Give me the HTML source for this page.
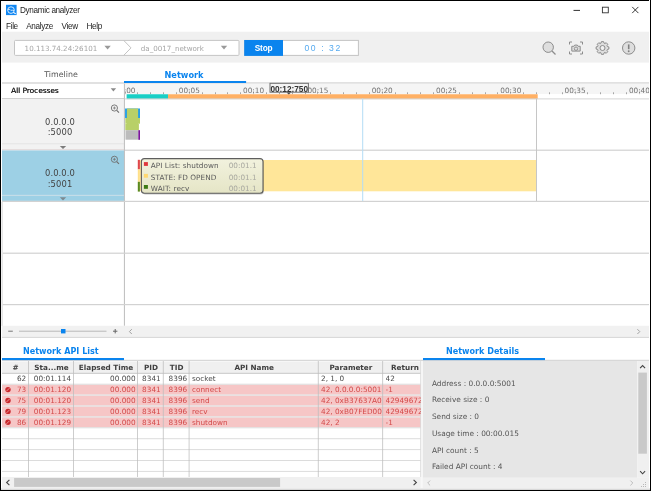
<!DOCTYPE html>
<html lang="en">
<head>
<meta charset="utf-8">
<title>Dynamic analyzer</title>
<style>
html,body{margin:0;padding:0;}
body{width:651px;height:491px;overflow:hidden;background:#fff;position:relative;font-family:"DejaVu Sans","Liberation Sans",sans-serif;font-size:7.3px;color:#4a4a4a;}
div,span,svg{position:absolute;box-sizing:border-box;}
.t{white-space:pre;line-height:10px;height:10px;}
.ui{font-family:"Liberation Sans",sans-serif;color:#1e1e1e;font-size:8.2px;letter-spacing:-0.34px;}
.ls{font-family:"Liberation Sans",sans-serif;}
.b{font-weight:bold;}
.c{text-align:center;}
.r{text-align:right;}
.red{color:#d34a4a;}
</style>
</head>
<body>
<svg style="left:0;top:0" width="651" height="491" viewBox="0 0 651 491">
<g transform="translate(6 4.8)"><rect x="0" y="0" width="10.6" height="10.3" fill="#0f86f2"/><circle cx="5" cy="5.3" r="3.3" fill="none" stroke="#fff" stroke-width="0.9" stroke-opacity="0.9"/><path d="M2 4.6 L3.8 4.6 L4.8 5.6 L6.2 5.4 L8 5.8" fill="none" stroke="#fff" stroke-width="0.8" stroke-opacity="0.9"/><path d="M7.4 7.6 L9.7 9" stroke="#fff" stroke-width="1.1"/></g>
<rect x="573.50" y="9.90" width="6.50" height="1.00" fill="#333"/>
<rect x="602.4" y="7.2" width="5.9" height="5.6" fill="none" stroke="#333" stroke-width="0.9"/>
<path d="M632.2 6.9 L638.4 13.1 M638.4 6.9 L632.2 13.1" stroke="#222" stroke-width="0.9" fill="none"/>
<rect x="2.00" y="31.70" width="647.00" height="30.90" fill="#f0f0f0"/>
<rect x="14.5" y="40.4" width="224.5" height="15" rx="1" fill="#fff" stroke="#c4c4c4" stroke-width="1"/>
<path d="M123.7 40.4 L131 47.9 L123.7 55.4" fill="none" stroke="#c4c4c4" stroke-width="1"/>
<path d="M104.40 45.80 L110.80 45.80 L107.60 49.40 Z" fill="#9a9a9a"/>
<path d="M220.80 45.80 L227.20 45.80 L224.00 49.40 Z" fill="#9a9a9a"/>
<rect x="244.7" y="40.4" width="113.7" height="15" fill="#fff" stroke="#c4c4c4" stroke-width="1"/>
<rect x="244.20" y="40.00" width="38.80" height="15.90" fill="#0a84ee"/>
<g transform="translate(549 48)"><circle cx="-0.8" cy="-0.8" r="5.2" fill="#dedede" stroke="#8c8c8c" stroke-width="1"/><path d="M3 3 L6.5 6.5" stroke="#8c8c8c" stroke-width="1.3"/></g>
<g transform="translate(576 48)"><path d="M-6.5 -3.5 V-6 H-4 M4 -6 H6.5 V-3.5 M6.5 3.5 V6 H4 M-4 6 H-6.5 V3.5" fill="none" stroke="#8c8c8c" stroke-width="1"/><path d="M-4.2 -1.7 H-2.1 L-1.3 -2.9 H1.3 L2.1 -1.7 H4.2 V3.1 H-4.2 Z" fill="#dedede" stroke="#8c8c8c" stroke-width="1" stroke-linejoin="round"/><circle cx="0" cy="0.7" r="1.7" fill="none" stroke="#8c8c8c" stroke-width="0.9"/></g>
<g transform="translate(602.5 48)"><path d="M-1.51 -4.87 L-1.09 -6.36 L1.09 -6.36 L1.51 -4.87 L2.38 -4.51 L3.72 -5.27 L5.27 -3.72 L4.51 -2.38 L4.87 -1.51 L6.36 -1.09 L6.36 1.09 L4.87 1.51 L4.51 2.38 L5.27 3.72 L3.72 5.27 L2.38 4.51 L1.51 4.87 L1.09 6.36 L-1.09 6.36 L-1.51 4.87 L-2.38 4.51 L-3.72 5.27 L-5.27 3.72 L-4.51 2.38 L-4.87 1.51 L-6.36 1.09 L-6.36 -1.09 L-4.87 -1.51 L-4.51 -2.38 L-5.27 -3.72 L-3.72 -5.27 L-2.38 -4.51 Z" fill="#dedede" stroke="#8c8c8c" stroke-width="1" stroke-linejoin="round"/><circle cx="0" cy="0" r="2.5" fill="#f0f0f0" stroke="#8c8c8c" stroke-width="1"/></g>
<g transform="translate(628.7 48)"><circle cx="0" cy="0" r="6.2" fill="#dedede" stroke="#8c8c8c" stroke-width="1"/><path d="M0 -3.6 V1.2" stroke="#808080" stroke-width="1.6"/><circle cx="0" cy="3.2" r="0.95" fill="#808080"/></g>
<rect x="2.00" y="82.40" width="647.00" height="1.20" fill="#cdcdcd"/>
<rect x="124.00" y="81.00" width="122.10" height="2.00" fill="#0a84ee"/>
<path d="M110.70 88.20 L116.10 88.20 L113.40 91.40 Z" fill="#8a8a8a"/>
<rect x="2.00" y="98.00" width="122.00" height="1.00" fill="#d0d0d0"/>
<rect x="125.00" y="83.70" width="524.00" height="10.30" fill="#f5f5f5"/>
<rect x="125.00" y="91.20" width="1.00" height="3.00" fill="#c0c0c0"/>
<rect x="137.00" y="92.30" width="1.00" height="1.90" fill="#a6a6a6"/>
<rect x="150.00" y="92.30" width="1.00" height="1.90" fill="#a6a6a6"/>
<rect x="163.00" y="92.30" width="1.00" height="1.90" fill="#a6a6a6"/>
<rect x="176.00" y="92.30" width="1.00" height="1.90" fill="#a6a6a6"/>
<rect x="189.00" y="91.20" width="1.00" height="3.00" fill="#c0c0c0"/>
<rect x="202.00" y="92.30" width="1.00" height="1.90" fill="#a6a6a6"/>
<rect x="215.00" y="92.30" width="1.00" height="1.90" fill="#a6a6a6"/>
<rect x="227.00" y="92.30" width="1.00" height="1.90" fill="#a6a6a6"/>
<rect x="240.00" y="92.30" width="1.00" height="1.90" fill="#a6a6a6"/>
<rect x="253.00" y="91.20" width="1.00" height="3.00" fill="#c0c0c0"/>
<rect x="266.00" y="92.30" width="1.00" height="1.90" fill="#a6a6a6"/>
<rect x="279.00" y="92.30" width="1.00" height="1.90" fill="#a6a6a6"/>
<rect x="292.00" y="92.30" width="1.00" height="1.90" fill="#a6a6a6"/>
<rect x="305.00" y="92.30" width="1.00" height="1.90" fill="#a6a6a6"/>
<rect x="317.00" y="91.20" width="1.00" height="3.00" fill="#c0c0c0"/>
<rect x="330.00" y="92.30" width="1.00" height="1.90" fill="#a6a6a6"/>
<rect x="343.00" y="92.30" width="1.00" height="1.90" fill="#a6a6a6"/>
<rect x="356.00" y="92.30" width="1.00" height="1.90" fill="#a6a6a6"/>
<rect x="369.00" y="92.30" width="1.00" height="1.90" fill="#a6a6a6"/>
<rect x="382.00" y="91.20" width="1.00" height="3.00" fill="#c0c0c0"/>
<rect x="395.00" y="92.30" width="1.00" height="1.90" fill="#a6a6a6"/>
<rect x="407.00" y="92.30" width="1.00" height="1.90" fill="#a6a6a6"/>
<rect x="420.00" y="92.30" width="1.00" height="1.90" fill="#a6a6a6"/>
<rect x="433.00" y="92.30" width="1.00" height="1.90" fill="#a6a6a6"/>
<rect x="446.00" y="91.20" width="1.00" height="3.00" fill="#c0c0c0"/>
<rect x="459.00" y="92.30" width="1.00" height="1.90" fill="#a6a6a6"/>
<rect x="472.00" y="92.30" width="1.00" height="1.90" fill="#a6a6a6"/>
<rect x="485.00" y="92.30" width="1.00" height="1.90" fill="#a6a6a6"/>
<rect x="497.00" y="92.30" width="1.00" height="1.90" fill="#a6a6a6"/>
<rect x="510.00" y="91.20" width="1.00" height="3.00" fill="#c0c0c0"/>
<rect x="523.00" y="92.30" width="1.00" height="1.90" fill="#a6a6a6"/>
<rect x="536.00" y="92.30" width="1.00" height="1.90" fill="#a6a6a6"/>
<rect x="549.00" y="92.30" width="1.00" height="1.90" fill="#a6a6a6"/>
<rect x="562.00" y="92.30" width="1.00" height="1.90" fill="#a6a6a6"/>
<rect x="575.00" y="91.20" width="1.00" height="3.00" fill="#c0c0c0"/>
<rect x="587.00" y="92.30" width="1.00" height="1.90" fill="#a6a6a6"/>
<rect x="600.00" y="92.30" width="1.00" height="1.90" fill="#a6a6a6"/>
<rect x="613.00" y="92.30" width="1.00" height="1.90" fill="#a6a6a6"/>
<rect x="626.00" y="92.30" width="1.00" height="1.90" fill="#a6a6a6"/>
<rect x="639.00" y="91.20" width="1.00" height="3.00" fill="#c0c0c0"/>
<rect x="126.60" y="94.25" width="41.40" height="4.85" fill="#18cfc6"/>
<rect x="168.00" y="94.25" width="369.70" height="4.85" fill="#ffb064"/>
<rect x="125.00" y="98.40" width="524.00" height="1.00" fill="#d4d4d4"/>
<rect x="270" y="83.3" width="38.4" height="8.9" fill="#f4f4f4" stroke="#6e6e6e" stroke-width="1"/>
<path d="M286.6 92.4 L291 92.4 L288.8 94.6 Z" fill="#444"/>
<rect x="2.00" y="99.00" width="122.00" height="50.60" fill="#f2f2f2"/>
<rect x="2.00" y="143.30" width="122.00" height="1.00" fill="#e4e4e4"/>
<rect x="2.00" y="149.35" width="122.00" height="0.90" fill="#dccfcf"/>
<rect x="2.00" y="150.40" width="122.00" height="50.50" fill="#9dd0e5"/>
<rect x="2.00" y="194.80" width="122.00" height="1.20" fill="#c4dde8"/>
<path d="M59.80 145.90 L66.20 145.90 L63.00 149.10 Z" fill="#7c7c7c"/>
<path d="M59.80 197.20 L66.20 197.20 L63.00 200.40 Z" fill="#7c8a90"/>
<g transform="translate(114.4 108)"><circle cx="0" cy="0" r="3.1" fill="none" stroke="#6e6e6e" stroke-width="0.9"/><path d="M2.3 2.3 L4.6 4.6" stroke="#6e6e6e" stroke-width="1.1"/><path d="M-1.5 0 H1.5 M0 -1.5 V1.5" stroke="#6e6e6e" stroke-width="0.7"/></g>
<g transform="translate(114.4 159.3)"><circle cx="0" cy="0" r="3.1" fill="none" stroke="#6e6e6e" stroke-width="0.9"/><path d="M2.3 2.3 L4.6 4.6" stroke="#6e6e6e" stroke-width="1.1"/><path d="M-1.5 0 H1.5 M0 -1.5 V1.5" stroke="#6e6e6e" stroke-width="0.7"/></g>
<rect x="123.90" y="83.60" width="1.10" height="242.20" fill="#c2c2c2"/>
<rect x="125.00" y="149.60" width="524.00" height="1.20" fill="#d2d2d2"/>
<rect x="2.00" y="200.80" width="647.00" height="1.20" fill="#d2d2d2"/>
<rect x="2.00" y="252.60" width="647.00" height="1.20" fill="#d2d2d2"/>
<rect x="2.00" y="304.00" width="647.00" height="1.20" fill="#d2d2d2"/>
<rect x="125.05" y="108.50" width="14.95" height="9.50" fill="#249ee8"/>
<rect x="126.90" y="108.50" width="11.20" height="21.70" fill="#b8d068"/>
<rect x="125.30" y="118.00" width="14.70" height="5.70" fill="#b8d068"/>
<rect x="125.30" y="123.70" width="13.60" height="6.50" fill="#b8d068"/>
<rect x="125.50" y="130.20" width="12.70" height="9.50" fill="#bcbcbc"/>
<rect x="138.30" y="130.20" width="1.70" height="9.60" fill="#7a169a"/>
<rect x="139.90" y="160.00" width="396.30" height="31.30" fill="#ffe699"/>
<rect x="137.80" y="159.80" width="2.10" height="9.60" fill="#e0484a"/>
<rect x="137.80" y="169.40" width="2.10" height="12.40" fill="#ffe08a"/>
<rect x="137.80" y="181.80" width="2.10" height="9.80" fill="#5c8a1e"/>
<rect x="362.20" y="98.50" width="1.00" height="102.50" fill="#b4dcf6"/>
<rect x="536.00" y="98.50" width="1.00" height="102.50" fill="#c6c6c6"/>
<defs><linearGradient id="tg" x1="0" y1="0" x2="0" y2="1"><stop offset="0" stop-color="#f2f2de"/><stop offset="1" stop-color="#e5e5c6"/></linearGradient></defs>
<rect x="142.4" y="159.6" width="121.4" height="35" rx="3" fill="#000" fill-opacity="0.22"/>
<rect x="141.4" y="158.6" width="121.6" height="34.6" rx="3" fill="url(#tg)" stroke="#5e5e5e" stroke-width="1.1"/>
<rect x="143.90" y="162.10" width="4.00" height="3.80" fill="#e0383c"/>
<rect x="143.90" y="173.90" width="4.00" height="3.80" fill="#ffd870"/>
<rect x="143.90" y="185.00" width="4.00" height="3.80" fill="#3c7a14"/>
<rect x="2.00" y="325.80" width="647.00" height="11.20" fill="#f1f1f1"/>
<rect x="2.00" y="336.90" width="647.00" height="1.00" fill="#d6d6d6"/>
<rect x="1.40" y="201.90" width="1.50" height="124.00" fill="#e4e4e4"/>
<rect x="8.20" y="330.70" width="4.60" height="1.00" fill="#777"/>
<rect x="19.00" y="330.70" width="87.50" height="1.00" fill="#b8b8b8"/>
<rect x="61.00" y="329.00" width="4.50" height="4.40" fill="#0a84ee"/>
<rect x="113.00" y="330.70" width="4.40" height="1.00" fill="#666"/>
<rect x="114.70" y="329.00" width="1.00" height="4.40" fill="#666"/>
<path d="M131.8 329.2 L129.4 331.6 L131.8 334" fill="none" stroke="#999" stroke-width="0.9"/>
<path d="M637.4 329.2 L639.8 331.6 L637.4 334" fill="none" stroke="#999" stroke-width="0.9"/>
<rect x="2.00" y="359.80" width="647.00" height="1.00" fill="#cfcfcf"/>
<rect x="2.00" y="358.00" width="122.00" height="2.10" fill="#0a84ee"/>
<rect x="423.00" y="358.00" width="122.00" height="2.10" fill="#0a84ee"/>
<rect x="2.00" y="361.50" width="418.80" height="11.50" fill="#f0f0f0"/>
<rect x="2.00" y="384.70" width="418.80" height="9.90" fill="#f6c6c6"/>
<rect x="2.00" y="395.60" width="418.80" height="9.90" fill="#f6c6c6"/>
<rect x="2.00" y="406.50" width="418.80" height="9.90" fill="#f6c6c6"/>
<rect x="2.00" y="417.40" width="418.80" height="9.90" fill="#f6c6c6"/>
<rect x="2.00" y="372.80" width="418.80" height="1.00" fill="#c6c6c6"/>
<rect x="2.00" y="383.70" width="418.80" height="1.00" fill="#dcdcdc"/>
<rect x="2.00" y="394.60" width="418.80" height="1.00" fill="#dcdcdc"/>
<rect x="2.00" y="405.50" width="418.80" height="1.00" fill="#dcdcdc"/>
<rect x="2.00" y="416.40" width="418.80" height="1.00" fill="#dcdcdc"/>
<rect x="2.00" y="427.30" width="418.80" height="1.00" fill="#dcdcdc"/>
<rect x="2.00" y="438.20" width="418.80" height="1.00" fill="#dcdcdc"/>
<rect x="2.00" y="449.10" width="418.80" height="1.00" fill="#dcdcdc"/>
<rect x="2.00" y="460.00" width="418.80" height="1.00" fill="#dcdcdc"/>
<rect x="2.00" y="470.90" width="418.80" height="1.00" fill="#dcdcdc"/>
<rect x="28.00" y="361.00" width="1.00" height="116.00" fill="#bcbcbc" fill-opacity="0.75"/>
<rect x="73.00" y="361.00" width="1.00" height="116.00" fill="#bcbcbc" fill-opacity="0.75"/>
<rect x="137.00" y="361.00" width="1.00" height="116.00" fill="#bcbcbc" fill-opacity="0.75"/>
<rect x="162.80" y="361.00" width="1.00" height="116.00" fill="#bcbcbc" fill-opacity="0.75"/>
<rect x="188.60" y="361.00" width="1.00" height="116.00" fill="#bcbcbc" fill-opacity="0.75"/>
<rect x="317.80" y="361.00" width="1.00" height="116.00" fill="#bcbcbc" fill-opacity="0.75"/>
<rect x="382.10" y="361.00" width="1.00" height="116.00" fill="#bcbcbc" fill-opacity="0.75"/>
<rect x="420.30" y="361.00" width="1.00" height="116.00" fill="#d8d8d8"/>
<circle cx="8" cy="389.60" r="2.7" fill="#c8282c"/><path d="M6.50 391.10 L9.50 388.10" stroke="#f3b0b0" stroke-width="0.8"/>
<circle cx="8" cy="400.50" r="2.7" fill="#c8282c"/><path d="M6.50 402.00 L9.50 399.00" stroke="#f3b0b0" stroke-width="0.8"/>
<circle cx="8" cy="411.40" r="2.7" fill="#c8282c"/><path d="M6.50 412.90 L9.50 409.90" stroke="#f3b0b0" stroke-width="0.8"/>
<circle cx="8" cy="422.30" r="2.7" fill="#c8282c"/><path d="M6.50 423.80 L9.50 420.80" stroke="#f3b0b0" stroke-width="0.8"/>
<rect x="2.00" y="477.00" width="418.80" height="11.00" fill="#f0f0f0"/>
<rect x="14.10" y="478.00" width="266.00" height="8.90" fill="#c9c9c9"/>
<path d="M9.4 479.8 L6.6 482.5 L9.4 485.2" fill="none" stroke="#444" stroke-width="1.1"/>
<path d="M413.6 479.8 L416.4 482.5 L413.6 485.2" fill="none" stroke="#444" stroke-width="1.1"/>
<rect x="421.30" y="361.00" width="1.70" height="127.00" fill="#f6f6f6"/>
<rect x="423.00" y="361.00" width="214.20" height="116.80" fill="#e6e6e6"/>
<rect x="637.20" y="361.00" width="11.80" height="116.80" fill="#f0f0f0"/>
<rect x="638.30" y="372.60" width="8.60" height="81.10" fill="#c9c9c9"/>
<path d="M640.1 368.2 L642.6 365.6 L645.1 368.2" fill="none" stroke="#444" stroke-width="1.1"/>
<path d="M640.1 471.2 L642.6 473.8 L645.1 471.2" fill="none" stroke="#444" stroke-width="1.1"/>
<rect x="423.00" y="477.80" width="226.00" height="10.20" fill="#f0f0f0"/>
<path d="M430.1 480.6 L427.7 483 L430.1 485.4" fill="none" stroke="#b0b0b0" stroke-width="0.8"/>
<path d="M630.4 480.6 L632.8 483 L630.4 485.4" fill="none" stroke="#b0b0b0" stroke-width="0.8"/>
<g fill="#b8b8b8"><rect x="645" y="482" width="1" height="1"/><rect x="645" y="484" width="1" height="1"/><rect x="643" y="484" width="1" height="1"/><rect x="645" y="486" width="1" height="1"/><rect x="643" y="486" width="1" height="1"/><rect x="641" y="486" width="1" height="1"/></g>
<rect x="0.00" y="0.00" width="651.00" height="1.00" fill="#000"/>
<rect x="0.00" y="0.00" width="1.00" height="491.00" fill="#000"/>
<rect x="649.00" y="0.00" width="1.00" height="491.00" fill="#fff"/>
<rect x="650.00" y="0.00" width="1.00" height="491.00" fill="#000"/>
<rect x="1.00" y="488.00" width="649.00" height="1.00" fill="#ebebeb"/>
<rect x="1.00" y="489.00" width="649.00" height="1.00" fill="#d8d8d8"/>
<rect x="0.00" y="490.00" width="651.00" height="1.00" fill="#000"/>
</svg>
<div id="txt" style="left:0;top:0;width:651px;height:491px;will-change:transform">
<div class="t ui" style="left:20px;top:6px;">Dynamic analyzer</div>
<div class="t ui" style="left:6px;top:22px;">File</div>
<div class="t ui" style="left:26.2px;top:22px;">Analyze</div>
<div class="t ui" style="left:61.5px;top:22px;">View</div>
<div class="t ui" style="left:86.5px;top:22px;">Help</div>
<div class="t" style="left:24.6px;top:43.8px;color:#a6a6a6;font-size:7.13px;">10.113.74.24:26101</div>
<div class="t" style="left:140.8px;top:43.8px;color:#a6a6a6;font-size:7.13px;">da_0017_network</div>
<div class="t b c ls" style="left:244.2px;top:43.3px;width:38.8px;color:#fff;font-size:8.3px;letter-spacing:-0.2px;">Stop</div>
<div class="t ls" style="left:304.4px;top:43.1px;color:#55aaf0;font-size:8.6px;letter-spacing:1.6px;">00 : 32</div>
<div class="t c" style="left:31px;top:70px;width:60px;color:#555;font-size:7.9px;">Timeline</div>
<div class="t b c" style="left:150px;top:69.6px;width:68px;color:#0a84ee;font-size:8.2px;">Network</div>
<div class="t" style="left:11px;top:85.5px;color:#222;font-size:7.35px;text-shadow:0.25px 0 0 #222;">All Processes</div>
<div style="left:125px;top:84px;width:524px;height:11px;overflow:hidden">
<div class="t c" style="left:-20.00px;top:1.8px;width:40px;color:#727272;font-size:7.3px;">00:00</div>
<div class="t c" style="left:44.30px;top:1.8px;width:40px;color:#727272;font-size:7.3px;">00:05</div>
<div class="t c" style="left:108.60px;top:1.8px;width:40px;color:#727272;font-size:7.3px;">00:10</div>
<div class="t c" style="left:172.90px;top:1.8px;width:40px;color:#727272;font-size:7.3px;">00:15</div>
<div class="t c" style="left:237.20px;top:1.8px;width:40px;color:#727272;font-size:7.3px;">00:20</div>
<div class="t c" style="left:301.50px;top:1.8px;width:40px;color:#727272;font-size:7.3px;">00:25</div>
<div class="t c" style="left:365.80px;top:1.8px;width:40px;color:#727272;font-size:7.3px;">00:30</div>
<div class="t c" style="left:430.10px;top:1.8px;width:40px;color:#727272;font-size:7.3px;">00:35</div>
<div class="t c" style="left:494.40px;top:1.8px;width:40px;color:#727272;font-size:7.3px;">00:40</div>
</div>
<div class="t b c ls" style="left:269.5px;top:85px;width:39.5px;color:#333;font-size:8.25px;">00:12:750</div>
<div class="t c" style="left:2px;top:116.5px;width:116px;color:#444;font-size:8.4px;letter-spacing:0.1px;">0.0.0.0</div>
<div class="t c" style="left:2px;top:126.5px;width:116px;color:#444;font-size:8.4px;letter-spacing:0.1px;">:5000</div>
<div class="t c" style="left:2px;top:167.5px;width:116px;color:#444;font-size:8.4px;letter-spacing:0.1px;">0.0.0.0</div>
<div class="t c" style="left:2px;top:178.5px;width:116px;color:#444;font-size:8.4px;letter-spacing:0.1px;">:5001</div>
<div class="t" style="left:150.8px;top:160.8px;color:#5a5a5a;font-size:7.3px;letter-spacing:0.05px;">API List: shutdown</div>
<div class="t" style="left:228.7px;top:160.8px;color:#a8a8a0;font-size:7.3px;">00:01.1</div>
<div class="t" style="left:150.8px;top:172.5px;color:#5a5a5a;font-size:7.3px;letter-spacing:0.05px;">STATE: FD OPEND</div>
<div class="t" style="left:228.7px;top:172.5px;color:#a8a8a0;font-size:7.3px;">00:01.1</div>
<div class="t" style="left:150.8px;top:183.9px;color:#5a5a5a;font-size:7.3px;letter-spacing:0.05px;">WAIT: recv</div>
<div class="t" style="left:228.7px;top:183.9px;color:#a8a8a0;font-size:7.3px;">00:01.1</div>
<div class="t b" style="left:23px;top:347px;color:#0a84ee;font-size:8.07px;">Network API List</div>
<div class="t b" style="left:446px;top:347px;color:#0a84ee;font-size:8.07px;">Network Details</div>
<div class="t b c" style="left:2px;top:362.6px;width:27px;color:#404040;font-size:7.25px;">#</div>
<div class="t b c" style="left:29px;top:362.6px;width:45px;color:#404040;font-size:7.25px;">Sta...me</div>
<div class="t b c" style="left:74px;top:362.6px;width:64px;color:#404040;font-size:7.25px;">Elapsed Time</div>
<div class="t b c" style="left:138px;top:362.6px;width:25.80000000000001px;color:#404040;font-size:7.25px;">PID</div>
<div class="t b c" style="left:163.8px;top:362.6px;width:25.799999999999983px;color:#404040;font-size:7.25px;">TID</div>
<div class="t b c" style="left:189.6px;top:362.6px;width:129.20000000000002px;color:#404040;font-size:7.25px;">API Name</div>
<div class="t b c" style="left:318.8px;top:362.6px;width:64.19999999999999px;color:#404040;font-size:7.25px;">Parameter</div>
<div class="t b" style="left:391px;top:362.6px;color:#404040;font-size:7.25px;">Return</div>
<div class="t r" style="left:2px;top:374.25px;width:24.2px;">62</div>
<div class="t" style="left:33.8px;top:374.25px;">00:01.114</div>
<div class="t r" style="left:74px;top:374.25px;width:61.599999999999994px;">00.000</div>
<div class="t r" style="left:138px;top:374.25px;width:22.69999999999999px;">8341</div>
<div class="t r" style="left:163.8px;top:374.25px;width:23.4px;">8396</div>
<div class="t" style="left:192px;top:374.25px;">socket</div>
<div class="t" style="left:321px;top:374.25px;">2, 1, 0</div>
<div class="t" style="left:385.5px;top:374.25px;width:35px;overflow:hidden;">42</div>
<div class="t red r" style="left:2px;top:385.15px;width:24.2px;">73</div>
<div class="t red" style="left:33.8px;top:385.15px;">00:01.120</div>
<div class="t red r" style="left:74px;top:385.15px;width:61.599999999999994px;">00.000</div>
<div class="t red r" style="left:138px;top:385.15px;width:22.69999999999999px;">8341</div>
<div class="t red r" style="left:163.8px;top:385.15px;width:23.4px;">8396</div>
<div class="t red" style="left:192px;top:385.15px;">connect</div>
<div class="t red" style="left:321px;top:385.15px;">42, 0.0.0.0:5001</div>
<div class="t red" style="left:385.5px;top:385.15px;width:35px;overflow:hidden;">-1</div>
<div class="t red r" style="left:2px;top:396.05px;width:24.2px;">75</div>
<div class="t red" style="left:33.8px;top:396.05px;">00:01.120</div>
<div class="t red r" style="left:74px;top:396.05px;width:61.599999999999994px;">00.000</div>
<div class="t red r" style="left:138px;top:396.05px;width:22.69999999999999px;">8341</div>
<div class="t red r" style="left:163.8px;top:396.05px;width:23.4px;">8396</div>
<div class="t red" style="left:192px;top:396.05px;">send</div>
<div class="t red" style="left:321px;top:396.05px;">42, 0xB37637A0</div>
<div class="t red" style="left:385.5px;top:396.05px;width:35px;overflow:hidden;">42949672</div>
<div class="t red r" style="left:2px;top:406.95px;width:24.2px;">79</div>
<div class="t red" style="left:33.8px;top:406.95px;">00:01.123</div>
<div class="t red r" style="left:74px;top:406.95px;width:61.599999999999994px;">00.000</div>
<div class="t red r" style="left:138px;top:406.95px;width:22.69999999999999px;">8341</div>
<div class="t red r" style="left:163.8px;top:406.95px;width:23.4px;">8396</div>
<div class="t red" style="left:192px;top:406.95px;">recv</div>
<div class="t red" style="left:321px;top:406.95px;">42, 0xB07FED00</div>
<div class="t red" style="left:385.5px;top:406.95px;width:35px;overflow:hidden;">42949672</div>
<div class="t red r" style="left:2px;top:417.85px;width:24.2px;">86</div>
<div class="t red" style="left:33.8px;top:417.85px;">00:01.129</div>
<div class="t red r" style="left:74px;top:417.85px;width:61.599999999999994px;">00.000</div>
<div class="t red r" style="left:138px;top:417.85px;width:22.69999999999999px;">8341</div>
<div class="t red r" style="left:163.8px;top:417.85px;width:23.4px;">8396</div>
<div class="t red" style="left:192px;top:417.85px;">shutdown</div>
<div class="t red" style="left:321px;top:417.85px;">42, 2</div>
<div class="t red" style="left:385.5px;top:417.85px;width:35px;overflow:hidden;">-1</div>
<div class="t" style="left:431.9px;top:378.6px;color:#555;font-size:7.4px;">Address : 0.0.0.0:5001</div>
<div class="t" style="left:431.9px;top:395.35px;color:#555;font-size:7.4px;">Receive size : 0</div>
<div class="t" style="left:431.9px;top:412.1px;color:#555;font-size:7.4px;">Send size : 0</div>
<div class="t" style="left:431.9px;top:428.85px;color:#555;font-size:7.4px;">Usage time : 00:00.015</div>
<div class="t" style="left:431.9px;top:445.6px;color:#555;font-size:7.4px;">API count : 5</div>
<div class="t" style="left:431.9px;top:462.35px;color:#555;font-size:7.4px;">Failed API count : 4</div>
</div>
</body>
</html>
